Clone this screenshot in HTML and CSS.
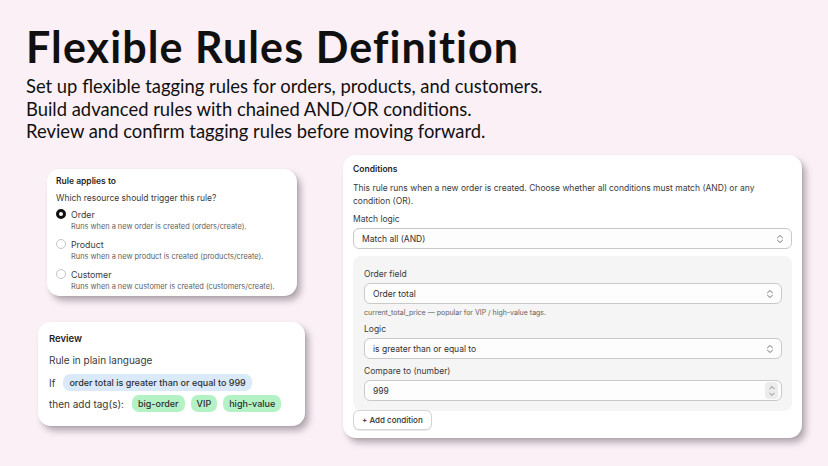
FILE: index.html
```html
<!DOCTYPE html>
<html lang="en">
<head>
  <meta charset="UTF-8">
  <title>Flexible Rules Definition</title>
  <link rel="stylesheet" href="styles.css">
</head>
<body>
  <header class="hero">
    <h1>Flexible Rules Definition</h1>
    <p>Set up flexible tagging rules for orders, products, and customers.</p>
    <p>Build advanced rules with chained AND/OR conditions.</p>
    <p>Review and confirm tagging rules before moving forward.</p>
  </header>

  <main class="screens">
    <div class="left-col">
      <section class="card applies">
        <h2 class="card-title">Rule applies to</h2>
        <div class="question">Which resource should trigger this rule?</div>
        <div class="radio-row">
          <span class="radio checked"></span><span class="radio-label">Order</span>
        </div>
        <div class="radio-help">Runs when a new order is created (orders/create).</div>
        <div class="radio-row">
          <span class="radio"></span><span class="radio-label">Product</span>
        </div>
        <div class="radio-help">Runs when a new product is created (products/create).</div>
        <div class="radio-row">
          <span class="radio"></span><span class="radio-label">Customer</span>
        </div>
        <div class="radio-help">Runs when a new customer is created (customers/create).</div>
      </section>

      <section class="card review">
        <h2 class="card-title">Review</h2>
        <div class="plain">Rule in plain language</div>
        <div class="review-row">
          <span>If</span>
          <span class="pill blue">order total is greater than or equal to 999</span>
        </div>
        <div class="review-row">
          <span>then add tag(s):</span>
          <span class="pill green">big-order</span>
          <span class="pill green">VIP</span>
          <span class="pill green">high-value</span>
        </div>
      </section>
    </div>

    <section class="card conditions">
      <h2 class="card-title">Conditions</h2>
      <p class="desc">This rule runs when a new order is created. Choose whether all conditions must match (AND) or any condition (OR).</p>
      <div class="field-label">Match logic</div>
      <div class="select">
        <span>Match all (AND)</span>
        <svg class="chev" width="8" height="10" viewBox="0 0 8 10"><path d="M1.5 3.8 4 1.5l2.5 2.3M1.5 6.2 4 8.5l2.5-2.3" fill="none" stroke="#777" stroke-width="1" stroke-linecap="round" stroke-linejoin="round"/></svg>
      </div>

      <div class="panel">
        <div class="field-label">Order field</div>
        <div class="select">
          <span>Order total</span>
          <svg class="chev" width="8" height="10" viewBox="0 0 8 10"><path d="M1.5 3.8 4 1.5l2.5 2.3M1.5 6.2 4 8.5l2.5-2.3" fill="none" stroke="#777" stroke-width="1" stroke-linecap="round" stroke-linejoin="round"/></svg>
        </div>
        <div class="hint">current_total_price — popular for VIP / high-value tags.</div>
        <div class="field-label">Logic</div>
        <div class="select">
          <span>is greater than or equal to</span>
          <svg class="chev" width="8" height="10" viewBox="0 0 8 10"><path d="M1.5 3.8 4 1.5l2.5 2.3M1.5 6.2 4 8.5l2.5-2.3" fill="none" stroke="#777" stroke-width="1" stroke-linecap="round" stroke-linejoin="round"/></svg>
        </div>
        <div class="field-label">Compare to (number)</div>
        <div class="select number">
          <span>999</span>
          <span class="spinner">
            <svg width="8" height="14" viewBox="0 0 8 14"><path d="M1.8 4.8 4 2.6l2.2 2.2M1.8 9.2 4 11.4l2.2-2.2" fill="none" stroke="#888" stroke-width="1" stroke-linecap="round" stroke-linejoin="round"/></svg>
          </span>
        </div>
      </div>
      <button class="add-btn">+ Add condition</button>
    </section>
  </main>
</body>
</html>
```

FILE: styles.css
```css
:root {
  --bg-page: #fbf0f6;
  --text-dark: #101010;
  --text-card: #303030;
  --text-muted: #616161;
  --border-field: #c9c9c9;
  --panel-bg: #f5f5f5;
  --card-shadow: 4px 5px 6px rgba(60, 50, 60, 0.35), 1px 1px 2px rgba(0, 0, 0, 0.08);
}

body {
  margin: 0;
  width: 828px;
  height: 466px;
  overflow: hidden;
  background-color: var(--bg-page);
  font-family: Inter, "Liberation Sans", sans-serif;
  color: var(--text-card);
}

/* headline */
.hero {
  padding: 21px 0 0 26px;
}
.hero h1 {
  margin: 0 0 2px 0;
  font-family: Lato, "Noto Sans", sans-serif;
  font-size: 43px;
  font-weight: 700;
  line-height: 52px;
  color: var(--text-dark);
  letter-spacing: 1.1px;
}
.hero p {
  margin: 0;
  font-family: Lato, "Noto Sans", sans-serif;
  font-size: 18.4px;
  line-height: 22.7px;
  color: var(--text-dark);
}

/* screenshots area */
.screens {
  display: flex;
  align-items: flex-start;
  padding: 12px 0 0 38px;
}

.left-col {
  display: flex;
  flex-direction: column;
  width: 267px;
}

.card {
  background: #fff;
  border-radius: 13px;
  box-shadow: var(--card-shadow);
  box-sizing: border-box;
}

.card-title {
  margin: 0;
  font-size: 8.5px;
  font-weight: 600;
  color: #1f1f1f;
}

/* rule applies to */
.applies {
  width: 250px;
  height: 127px;
  margin: 14px 0 0 9px;
  padding: 7px 9px 0;
  font-size: 8px;
}
.question {
  margin: 7px 0 4px;
  font-size: 8.5px;
  color: #3a3a3a;
}
.radio-row {
  display: flex;
  align-items: center;
  gap: 5px;
  height: 14px;
}
.radio {
  width: 8px;
  height: 8px;
  border: 1px solid #c4c4c4;
  border-radius: 50%;
  background: #fff;
}
.radio.checked {
  width: 4px;
  height: 4px;
  border: 3px solid #111;
}
.radio-label {
  font-size: 8.8px;
  color: #3a3a3a;
}
.radio-help {
  margin: 1px 0 6px 15px;
  font-size: 7.4px;
  line-height: 9px;
  color: var(--text-muted);
}

/* review */
.review {
  width: 267px;
  height: 104px;
  margin-top: 26px;
  padding: 11px 11px 0;
  font-size: 10px;
}
.review .card-title {
  font-size: 9.5px;
}
.plain {
  margin: 10px 0 8px;
  font-size: 10px;
  color: #3a3a3a;
}
.review-row {
  display: flex;
  align-items: center;
  gap: 6px;
  margin-bottom: 4px;
  font-size: 10px;
  color: #3a3a3a;
}
.review-row > span:first-child {
  margin-right: 2px;
}
.pill {
  padding: 2px 6px;
  border-radius: 7px;
  font-size: 9px;
  font-weight: 500;
  color: #2f2f2f;
  line-height: 13px;
}
.pill.blue {
  background: #dbeafb;
}
.pill.green {
  background: #b4f2c6;
}

/* conditions */
.conditions {
  width: 459px;
  height: 283px;
  margin: 0 0 0 38px;
  padding: 9px 10px 8px;
}
.desc {
  margin: 8px 0 6px;
  font-size: 8.5px;
  line-height: 13px;
  color: #3a3a3a;
}
.field-label {
  margin-bottom: 4px;
  font-size: 8.5px;
  color: #3a3a3a;
}
.select {
  display: flex;
  align-items: center;
  justify-content: space-between;
  height: 21px;
  padding: 0 7px 0 8px;
  border: 1px solid var(--border-field);
  border-radius: 6px;
  background: #fdfdfd;
  box-sizing: border-box;
  font-size: 8.5px;
  color: #303030;
}
.chev {
  display: block;
}
.number {
  padding-right: 3px;
}
.spinner {
  display: flex;
  align-items: center;
  justify-content: center;
  width: 13px;
  height: 17px;
  border-radius: 4px;
  background: #ececec;
}

.panel {
  margin-top: 7px;
  padding: 13px 10px 10px 11px;
  border-radius: 8px;
  background: var(--panel-bg);
}
.hint {
  margin: 4px 0 7px;
  font-size: 7px;
  color: var(--text-muted);
}
.panel .select + .field-label {
  margin-top: 7px;
}

.add-btn {
  display: block;
  position: relative;
  margin-top: -1px;
  padding: 4px 8px;
  border: 1px solid #d4d4d4;
  border-radius: 6px;
  background: #fff;
  font-family: Inter, "Liberation Sans", sans-serif;
  font-size: 8px;
  font-weight: 500;
  color: #303030;
  box-shadow: 0 1px 0 rgba(0, 0, 0, 0.08);
}
```
